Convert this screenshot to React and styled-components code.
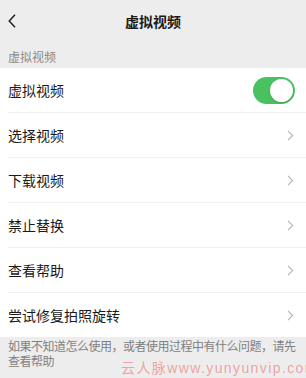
import styled, { createGlobalStyle } from 'styled-components';

const GlobalStyle = createGlobalStyle`
  html, body {
    margin: 0;
    padding: 0;
    background: #ededed;
  }
  body {
    font-family: "Noto Sans CJK SC", "Noto Sans", sans-serif;
    color: #1a1a1a;
  }
`;

const Page = styled.div`
  position: relative;
  width: 306px;
  height: 378px;
  overflow: hidden;
  background: #ededed;
`;

const Header = styled.div`
  position: relative;
  display: flex;
  align-items: center;
  justify-content: center;
  height: 42px;
`;

const BackButton = styled.div`
  position: absolute;
  left: 8px;
  top: 14px;
  width: 8px;
  height: 14px;
  display: flex;
`;

const Title = styled.div`
  font-size: 14px;
  font-weight: 700;
  line-height: 16px;
  margin-top: -1px;
`;

const SectionLabel = styled.div`
  padding: 7px 8px 3px;
  font-size: 12px;
  line-height: 16px;
  color: #8a8a8a;
`;

const List = styled.div`
  display: flex;
  flex-direction: column;
  background: #fff;
`;

const Row = styled.div`
  display: flex;
  align-items: center;
  justify-content: space-between;
  height: 44px;
  margin-left: 8px;
  padding-right: 12px;
  border-bottom: ${(props) => (props.last ? 'none' : '1px solid #f0f0f0')};
  font-size: 14px;
`;

const Toggle = styled.div`
  position: relative;
  width: 42px;
  height: 27px;
  margin-right: -1px;
  border-radius: 14px;
  background: #4ac15f;
`;

const Knob = styled.div`
  position: absolute;
  right: 2px;
  top: 2px;
  width: 23px;
  height: 23px;
  border-radius: 50%;
  background: #fff;
  box-shadow: 0 1px 2px rgba(0, 0, 0, 0.15);
`;

const Footer = styled.div`
  padding: 1px 0 0 8px;
  font-size: 12px;
  line-height: 15px;
  letter-spacing: -0.5px;
  color: #808080;
`;

const Watermark = styled.div`
  position: absolute;
  left: 121px;
  top: 360px;
  font-family: "Liberation Sans", "Noto Sans CJK SC", sans-serif;
  font-size: 14px;
  line-height: 17px;
  letter-spacing: 1.4px;
  white-space: nowrap;
  color: rgba(238, 110, 110, 0.6);
`;

const Chevron = () => (
  <svg width="7" height="11" viewBox="0 0 7 11">
    <path d="M1 0.8 L5.6 5.5 L1 10.2" fill="none" stroke="#b5b5b5" strokeWidth="1.2" />
  </svg>
);

const items = ['选择视频', '下载视频', '禁止替换', '查看帮助', '尝试修复拍照旋转'];

export default function App() {
  return (
    <Page>
      <GlobalStyle />
      <Header>
        <BackButton>
          <svg width="8" height="14" viewBox="0 0 8 14">
            <path d="M7 0.8 L1.2 7 L7 13.2" fill="none" stroke="#1a1a1a" strokeWidth="1.4" />
          </svg>
        </BackButton>
        <Title>虚拟视频</Title>
      </Header>
      <SectionLabel>虚拟视频</SectionLabel>
      <List>
        <Row>
          虚拟视频
          <Toggle>
            <Knob />
          </Toggle>
        </Row>
        {items.map((item, index) => (
          <Row key={item} last={index === items.length - 1}>
            {item}
            <Chevron />
          </Row>
        ))}
      </List>
      <Footer>如果不知道怎么使用，或者使用过程中有什么问题，请先查看帮助</Footer>
      <Watermark>云人脉www.yunyunvip.com</Watermark>
    </Page>
  );
}
